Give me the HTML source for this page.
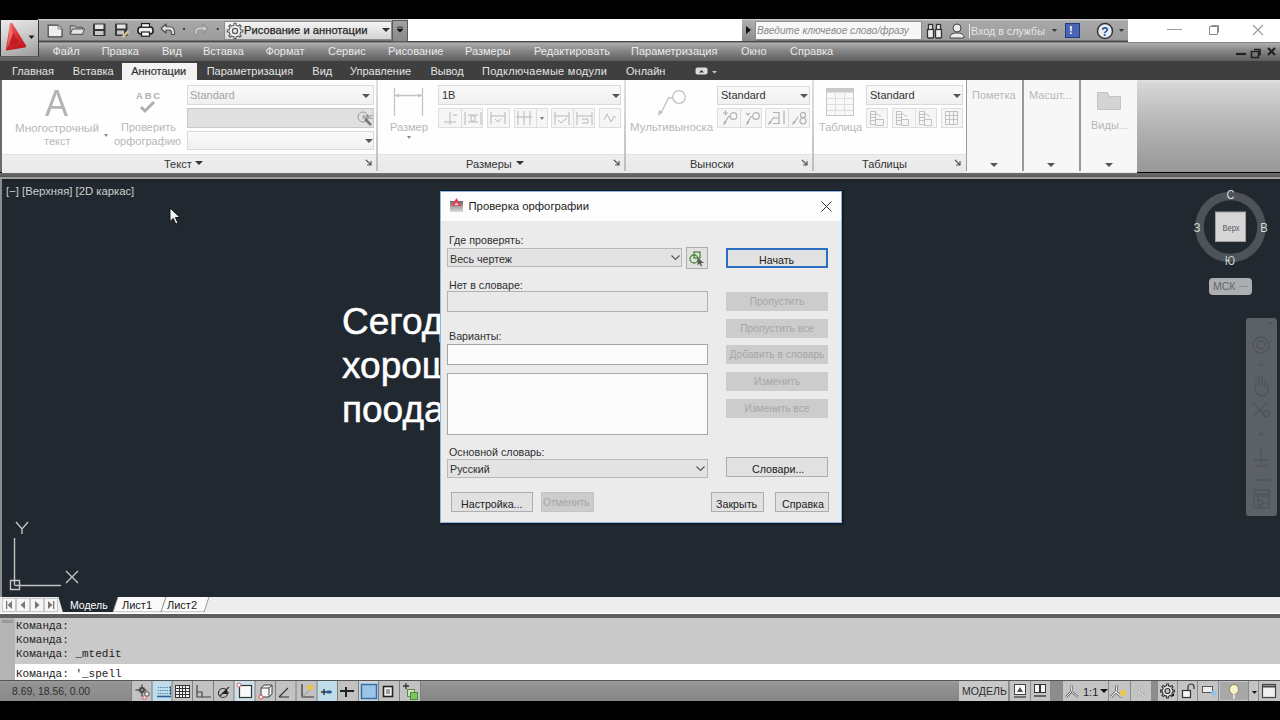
<!DOCTYPE html>
<html><head><meta charset="utf-8">
<style>
*{margin:0;padding:0;box-sizing:border-box}
html,body{width:1280px;height:720px;overflow:hidden;background:#000;font-family:"Liberation Sans",sans-serif}
.a{position:absolute}
.t{position:absolute;white-space:nowrap;line-height:1}
#qat{left:38px;top:19px;width:1242px;height:23px;background:linear-gradient(#c9c9c9 0,#c9c9c9 1px,#a8a8a8 2px,#9c9c9c 21px,#4a4a4a 22px)}
#menu{left:0;top:42px;width:1280px;height:19px;background:linear-gradient(#5a5a5a 0,#b0b0b0 1px,#a2a2a2 3px,#878787 45%,#5e5e5e)}
#tabs{left:0;top:61px;width:1280px;height:18.5px;background:#3f3f3f}
#ribbon{left:0;top:79.5px;width:1280px;height:92px;background:#fefefe}
#draw{left:0;top:172px;width:1280px;height:425px;background:#212830}
.mi{color:#eaeaea;font-size:11px;top:46.2px}
.ti{color:#e4e4e4;font-size:11px;top:65.7px}
.sep{top:80px;width:2px;height:91px;background:linear-gradient(#e0e0e0,#bdbdbd)}
.rl{font-size:11px;color:#b8b8b8}
.pt{top:159px;font-size:11px;color:#333}
.combo{background:linear-gradient(#fafafa,#f0f0f0);border:1px solid #dadada}
.arr{width:0;height:0;border-left:4px solid transparent;border-right:4px solid transparent;border-top:4px solid #555}
.btn{height:20px;background:#f6f6f6;border:1px solid #dedede}
.dl{font-size:10.7px;color:#2e2e2e}
.dd{font-size:10.2px;color:#a6a6a6}
.dbtn{width:102px;height:19px;background:#cccccc;font-size:10.2px;color:#a6a6a6;text-align:center;line-height:20px;white-space:nowrap}
.cm{font-family:"Liberation Mono",monospace;font-size:11px;color:#222}
</style></head><body>
<!-- ===== TOP BARS ===== -->
<div class="a" style="left:0;top:0;width:1280px;height:19px;background:#000"></div>
<div id="qat" class="a"></div>
<div class="a" style="left:407.5px;top:19px;width:334.5px;height:22px;background:#fff"></div>
<div class="a" style="left:1128px;top:19px;width:152px;height:23px;background:#fff"></div>
<div id="menu" class="a"></div>
<div id="tabs" class="a"></div>
<!-- logo -->
<div class="a" style="left:0;top:20px;width:39px;height:37px;background:linear-gradient(160deg,#ececec,#c4c4c4 55%,#9c9c9c);border-left:1px solid #333;border-right:1px solid #3a3a3a;border-bottom:1px solid #5a5a5a"></div>
<svg class="a" style="left:1px;top:20px" width="38" height="37" viewBox="0 0 38 37">
 <defs><filter id="bl" x="-20%" y="-20%" width="140%" height="140%"><feGaussianBlur stdDeviation="0.7"/></filter>
 <linearGradient id="rg" x1="0" y1="0" x2="0.3" y2="1"><stop offset="0" stop-color="#f07c7c"/><stop offset=".45" stop-color="#e23a3a"/><stop offset="1" stop-color="#c01a20"/></linearGradient></defs>
 <g filter="url(#bl)">
 <path d="M9 3.5Q10 2 11.5 3.5L25 25.5Q25.5 27 24 27.5L6 30.5Q4.5 30.5 5 29z" fill="url(#rg)"/>
 <path d="M12 13l6 10-9 2z" fill="#b81c22" opacity=".75"/>
 <path d="M9 4l3 9-6 16z" fill="#f59a9a" opacity=".5"/>
 </g>
 <path d="M27.5 15.5h6l-3 3.5z" fill="#1a1a1a"/>
</svg>
<!-- QAT icons -->
<svg class="a" style="left:44px;top:22px" width="180" height="18" viewBox="0 0 180 18">
 <path d="M4.2 3.2h9.8l4 3.8v7.8H4.2z" fill="#eeeeee" stroke="#4a4a4a" stroke-width="1.2"/>
 <path d="M14 3.2v3.8h4" fill="#ddd" stroke="#777" stroke-width="0.8"/>
 <path d="M26.2 3.8h4.5l1.5 1.5h6.5v7H26.2z" fill="#bdbdbd" stroke="#555"/>
 <path d="M28.5 7h12l-2.2 5.3H26.2z" fill="#e4e4e4" stroke="#555"/>
 <rect x="49" y="1.5" width="12.5" height="12.5" rx="1" fill="#363636"/>
 <rect x="51" y="2.5" width="8.5" height="4.5" fill="#e6e6e6"/>
 <rect x="51" y="9" width="8.5" height="4" fill="#c8c8c8"/>
 <rect x="71" y="1.5" width="12.5" height="12.5" rx="1" fill="#3a3a3a"/>
 <rect x="73" y="2.5" width="8.5" height="4" fill="#e6e6e6"/>
 <rect x="73" y="8.5" width="7" height="4" fill="#c8c8c8"/>
 <path d="M78.5 15l6-6" stroke="#f4e8b0" stroke-width="2.2"/><path d="M78.5 15l6-6" stroke="#b89830" stroke-width="0.8"/>
 <rect x="94" y="5" width="15" height="7" rx="3" fill="#f0f0f0" stroke="#1e1e1e" stroke-width="1.6"/>
 <rect x="97.5" y="1.6" width="8" height="3.6" fill="#f6f6f6" stroke="#1e1e1e" stroke-width="1.2"/>
 <rect x="97.5" y="10" width="8" height="4.2" fill="#fafafa" stroke="#1e1e1e" stroke-width="1.2"/>
 <path d="M117 6.5l5-4.5v2.8h3.5c3.5 0 5 2.5 5 5.5v2.2h-3v-2c0-1.5-.8-2.5-2.5-2.5H122v3z" fill="#e6e6e6" stroke="#4a4a4a" stroke-width="1.1" stroke-linejoin="round"/>
 <circle cx="140" cy="7" r="1.1" fill="#2a2a2a"/>
 <path d="M164 6.5l-5-4.5v2.8h-3.5c-3.5 0-5 2.5-5 5.5v2.2h3v-2c0-1.5.8-2.5 2.5-2.5H159v3z" fill="#c8c8c8" stroke="#909090" stroke-width="1.1" stroke-linejoin="round"/>
 <circle cx="173.7" cy="7" r="1.1" fill="#2a2a2a"/>
</svg>
<!-- workspace dropdown -->
<div class="a" style="left:224px;top:21px;width:168px;height:19px;background:linear-gradient(#f4f4f4,#d4d4d4);border:1px solid #8a8a8a"></div>
<svg class="a" style="left:226px;top:22px" width="18" height="18" viewBox="0 0 16 16"><path d="M12.95 6.40 L13.12 7.09 L14.95 7.13 L14.95 8.87 L13.12 8.91 L12.63 10.37 L12.26 10.98 L13.53 12.29 L12.29 13.53 L10.98 12.26 L9.60 12.95 L8.91 13.12 L8.87 14.95 L7.13 14.95 L7.09 13.12 L5.63 12.63 L5.02 12.26 L3.71 13.53 L2.47 12.29 L3.74 10.98 L3.05 9.60 L2.88 8.91 L1.05 8.87 L1.05 7.13 L2.88 7.09 L3.37 5.63 L3.74 5.02 L2.47 3.71 L3.71 2.47 L5.02 3.74 L6.40 3.05 L7.09 2.88 L7.13 1.05 L8.87 1.05 L8.91 2.88 L10.37 3.37 L10.98 3.74 L12.29 2.47 L13.53 3.71 L12.26 5.02Z" fill="#f4f4f4" stroke="#555" stroke-width="0.9"/><circle cx="8" cy="8" r="2.3" fill="#eee" stroke="#555" stroke-width="1.1"/></svg>
<div class="t" style="left:244px;top:25px;font-size:11.2px;color:#262626;-webkit-text-stroke:0.25px #262626">Рисование и аннотации</div>
<svg class="a" style="left:382px;top:27px" width="8" height="6"><path d="M0 1h8L4 5z" fill="#333"/></svg>
<div class="a" style="left:391.5px;top:19.5px;width:16px;height:22px;background:linear-gradient(#a0a0a0,#888);border:1px solid #5a5a5a"></div>
<svg class="a" style="left:396px;top:26px" width="8" height="7"><rect x="1" y="0.5" width="6" height="2" rx="1" fill="#555"/><path d="M0.5 3h7L4 6.5z" fill="#111"/></svg>
<!-- search -->
<div class="a" style="left:742px;top:20px;width:13px;height:21px;background:linear-gradient(#b0b0b0,#8a8a8a)"></div>
<svg class="a" style="left:746px;top:26px" width="5" height="8"><path d="M0 0l5 4-5 4z" fill="#111"/></svg>
<div class="a" style="left:755px;top:21px;width:167px;height:19px;background:#f7f7f7;border:1px solid #8c8c8c"></div>
<div class="t" style="left:757px;top:26px;font-size:10.15px;font-style:italic;color:#8a8a8a">Введите ключевое слово/фразу</div>
<svg class="a" style="left:926px;top:23px" width="17" height="16" viewBox="0 0 17 16"><g fill="#f0f0f0" stroke="#333" stroke-width="1.3"><rect x="1.5" y="6" width="6" height="9" rx="1"/><rect x="9.5" y="6" width="6" height="9" rx="1"/><rect x="2.5" y="1.5" width="4" height="5"/><rect x="10.5" y="1.5" width="4" height="5"/></g></svg>
<svg class="a" style="left:949px;top:22px" width="16" height="17" viewBox="0 0 16 17"><circle cx="8" cy="6" r="4" fill="#ececec" stroke="#444"/><path d="M1 16c0-4 3-5 7-5s7 1 7 5z" fill="#ececec" stroke="#444"/></svg>
<div class="a" style="left:969px;top:24px;width:1px;height:14px;background:#e8e8e8"></div>
<div class="t" style="left:971px;top:26px;font-size:10.7px;color:#e6e6e6">Вход в службы</div>
<svg class="a" style="left:1052px;top:29px" width="5" height="4"><path d="M0 0h5L2.5 3z" fill="#333"/></svg>
<div class="a" style="left:1065px;top:23px;width:15px;height:15px;background:#4a64b4;border:1px solid #223a80"></div>
<div class="t" style="left:1069px;top:25px;font-size:11px;font-weight:bold;color:#fff">!</div>
<svg class="a" style="left:1096px;top:22px" width="18" height="18" viewBox="0 0 18 18"><circle cx="9" cy="9" r="7.5" fill="#e8eef6" stroke="#333" stroke-width="1.5"/><text x="9" y="13.5" text-anchor="middle" font-family="Liberation Sans" font-weight="bold" font-size="12" fill="#2a4a8a">?</text></svg>
<svg class="a" style="left:1119px;top:29px" width="5" height="4"><path d="M0 0h5L2.5 3z" fill="#333"/></svg>
<!-- window controls -->
<div class="a" style="left:1167px;top:29px;width:15px;height:1px;background:#9a9a9a"></div>
<svg class="a" style="left:1209px;top:23px" width="12" height="12"><path d="M2.5 2.5h7v7M0.5 3.5h8v8h-8z" fill="none" stroke="#8a8a8a"/></svg>
<svg class="a" style="left:1252px;top:24px" width="12" height="12"><path d="M1 1l10 10M11 1L1 11" stroke="#9a9a9a" stroke-width="1.1"/></svg>
<!-- menu -->
<div class="t mi" style="left:52.5px">Файл</div>
<div class="t mi" style="left:101.7px">Правка</div>
<div class="t mi" style="left:162px">Вид</div>
<div class="t mi" style="left:203px">Вставка</div>
<div class="t mi" style="left:265.4px">Формат</div>
<div class="t mi" style="left:328px">Сервис</div>
<div class="t mi" style="left:388px">Рисование</div>
<div class="t mi" style="left:465px">Размеры</div>
<div class="t mi" style="left:534px">Редактировать</div>
<div class="t mi" style="left:631px">Параметризация</div>
<div class="t mi" style="left:741px">Окно</div>
<div class="t mi" style="left:790px">Справка</div>
<svg class="a" style="left:1234px;top:45px" width="46" height="14" viewBox="0 0 46 14"><path d="M2 9h10" stroke="#222" stroke-width="2.2"/><path d="M20 4.5h6v6M17.5 6.5h7v6h-7z" fill="none" stroke="#222" stroke-width="1.6"/><path d="M34 3l7 7M41 3l-7 7" stroke="#222" stroke-width="2.2"/></svg>
<!-- tabs -->
<div class="a" style="left:122px;top:63px;width:75px;height:17px;background:linear-gradient(#f4f4f4,#f0f0f0)"></div>
<div class="t ti" style="left:12px">Главная</div>
<div class="t ti" style="left:72.8px">Вставка</div>
<div class="t ti" style="left:131.2px;color:#333;-webkit-text-stroke:0.2px #333">Аннотации</div>
<div class="t ti" style="left:206.7px">Параметризация</div>
<div class="t ti" style="left:312.3px">Вид</div>
<div class="t ti" style="left:350px">Управление</div>
<div class="t ti" style="left:430.4px">Вывод</div>
<div class="t ti" style="left:482px;letter-spacing:0.28px">Подключаемые модули</div>
<div class="t ti" style="left:626px">Онлайн</div>
<svg class="a" style="left:695px;top:67px" width="24" height="9"><rect x="0.5" y="0.5" width="12" height="7" rx="2" fill="#dcdcdc"/><path d="M4 5.5h5L6.5 3z" fill="#333"/><path d="M17 4h5l-2.5 2.5z" fill="#c8c8c8"/></svg>
<!-- ===== RIBBON ===== -->
<div id="ribbon" class="a"></div>
<div class="a" style="left:0;top:80px;width:2px;height:92px;background:#6a6a6a"></div>
<!-- panel title bars -->
<div class="a" style="left:2px;top:154px;width:1135px;height:18.5px;background:linear-gradient(#eeeeee,#e9e9ea);border-top:1px solid #e2e2e2"></div>
<!-- separators -->
<div class="a sep" style="left:376px"></div>
<div class="a sep" style="left:624px"></div>
<div class="a sep" style="left:812px"></div>
<div class="a sep" style="left:966px"></div>
<div class="a sep" style="left:1022px"></div>
<div class="a sep" style="left:1079px"></div>
<div class="a" style="left:966px;top:79.5px;width:171px;height:92px;background:#f7f7f7"></div>
<div class="a sep" style="left:965.5px;width:1.5px;background:#9a9a9a"></div>
<div class="a sep" style="left:1022px;width:1.5px;background:#9a9a9a"></div>
<div class="a sep" style="left:1079px;width:1.5px;background:#9a9a9a"></div>
<div class="a" style="left:1137px;top:80px;width:143px;height:91.5px;background:linear-gradient(#e0e0e0,#d6d6d6 4%,#b4b4b4 50%,#979797)"></div>
<div class="a" style="left:0;top:172.5px;width:1280px;height:4.5px;background:linear-gradient(#6e6e6e,#565656)"></div>
<div class="a" style="left:0;top:177px;width:1280px;height:2px;background:#9c9da0"></div><div class="a" style="left:0;top:179px;width:1280px;height:3px;background:#1f2328"></div>
<!-- Text panel -->
<div class="t" style="left:44.5px;top:84.5px;font-size:37.5px;color:#b4b4b4;transform:scaleX(0.92);transform-origin:left">A</div>
<div class="t rl" style="left:15px;top:122px;font-size:11.6px">Многострочный</div>
<div class="t rl" style="left:44px;top:136px">текст</div>
<div class="a" style="left:104px;top:134px;width:0;height:0;border-left:2px solid transparent;border-right:2px solid transparent;border-top:3px solid #888"></div>
<div class="t" style="left:136px;top:91px;font-size:9.5px;font-weight:bold;color:#b0b0b0;letter-spacing:1.8px">ABC</div>
<svg class="a" style="left:138px;top:100px" width="20" height="14"><path d="M3 7l4 4 9-9" fill="none" stroke="#b0b0b0" stroke-width="3"/></svg>
<div class="t rl" style="left:121px;top:122px">Проверить</div>
<div class="t rl" style="left:114px;top:136px">орфографию</div>
<div class="a combo" style="left:187px;top:85px;width:187px;height:20px"></div>
<div class="t" style="left:190px;top:90px;font-size:11px;color:#a4a4a4">Standard</div>
<div class="a arr" style="left:362px;top:94px"></div>
<div class="a" style="left:187px;top:108px;width:187px;height:20px;background:#e0e0e0;border:1px solid #c8c8c8"></div>
<svg class="a" style="left:356px;top:110px" width="18" height="16"><circle cx="7" cy="7" r="5" fill="none" stroke="#999"/><text x="6" y="9" font-size="5" font-family="Liberation Sans" font-weight="bold" fill="#888">ABC</text><path d="M9 9l6 6" stroke="#777" stroke-width="2.5"/></svg>
<div class="a combo" style="left:187px;top:131px;width:187px;height:19px"></div>
<div class="a arr" style="left:365px;top:139px"></div>
<div class="t pt" style="left:164px">Текст</div>
<div class="a arr" style="left:195px;top:161px;border-top-color:#333"></div>
<svg class="a" style="left:365px;top:159px" width="8" height="8"><path d="M1 1l5 5M6 2v4H2" fill="none" stroke="#555" stroke-width="1.2"/></svg>
<!-- Dim panel -->
<svg class="a" style="left:390px;top:87px" width="36" height="30"><g stroke="#c4c4c4" stroke-width="1.3" fill="none"><path d="M4.5 1v28M32.5 1v28M4.5 8.5h28"/></g><path d="M5 8.5l4-2v4zM32 8.5l-4-2v4z" fill="#c4c4c4"/></svg>
<div class="t rl" style="left:390px;top:122px">Размер</div>
<div class="a" style="left:407px;top:136px;width:0;height:0;border-left:2px solid transparent;border-right:2px solid transparent;border-top:3px solid #888"></div>
<div class="a combo" style="left:438px;top:85px;width:183px;height:20px"></div>
<div class="t" style="left:442px;top:90px;font-size:11px;color:#333">1В</div>
<div class="a arr" style="left:612px;top:94px"></div>
<div class="a btn" style="left:438px;top:108px;width:45px"></div>
<div class="a btn" style="left:487px;top:108px;width:23px"></div>
<div class="a btn" style="left:514px;top:108px;width:34px"></div>
<div class="a btn" style="left:551px;top:108px;width:44px"></div>
<div class="a btn" style="left:599px;top:108px;width:22px"></div>
<div class="a" style="left:461px;top:109px;width:1px;height:18px;background:#dcdcdc"></div>
<div class="a" style="left:536px;top:109px;width:1px;height:18px;background:#dcdcdc"></div>
<div class="a" style="left:573px;top:109px;width:1px;height:18px;background:#dcdcdc"></div>
<svg class="a" style="left:438px;top:108px" width="184" height="20"><g fill="none" stroke="#b8b8b8" stroke-width="1">
 <path d="M12 4v13M6 14h12M15 7h4"/>
 <path d="M27 4v13M43 4v13M30 7h10M30 14h10M33 8h4v5h-4z"/>
 <path d="M53 4v12M67 4v12M53 8h14M57 11l3 3 3-3"/>
 <path d="M80 3v14M86 3v14M92 3v14M78 9h16"/>
 <path d="M117 4v13M131 4v13M117 8h14M120 12l3 3 6-5"/>
 <path d="M139 4v13M154 4v13M139 8h15M144 11h6v4h-6"/>
 <path d="M166 12l3-6 4 8 3-6 2 2"/>
</g><path d="M102 9h4l-2 3z" fill="#777"/></svg>
<div class="t pt" style="left:466px">Размеры</div>
<div class="a arr" style="left:516px;top:161px;border-top-color:#333"></div>
<svg class="a" style="left:613px;top:159px" width="8" height="8"><path d="M1 1l5 5M6 2v4H2" fill="none" stroke="#555" stroke-width="1.2"/></svg>
<!-- Leader panel -->
<svg class="a" style="left:655px;top:88px" width="34" height="32"><g fill="none" stroke="#c0c0c0" stroke-width="1.3"><circle cx="24" cy="9" r="6.3"/><path d="M17.5 10h-4l-8 16"/></g><path d="M3 28l1-6 4 2z" fill="#c0c0c0"/></svg>
<div class="t rl" style="left:630px;top:122px;font-size:11.5px">Мультивыноска</div>
<div class="a combo" style="left:717px;top:86px;width:93px;height:19px"></div>
<div class="t" style="left:721px;top:90px;font-size:11px;color:#333">Standard</div>
<div class="a arr" style="left:800px;top:94px"></div>
<div class="a btn" style="left:717px;top:108px;width:45px"></div>
<div class="a btn" style="left:765px;top:108px;width:45px"></div>
<div class="a" style="left:740px;top:109px;width:1px;height:18px;background:#dcdcdc"></div>
<div class="a" style="left:788px;top:109px;width:1px;height:18px;background:#dcdcdc"></div>
<svg class="a" style="left:717px;top:108px" width="94" height="20"><g fill="none" stroke="#b0b0b0" stroke-width="1.2">
 <circle cx="16.5" cy="8" r="3.3"/><path d="M13 8.5h-1.5l-4.5 8M6 5h5M8.5 2.5v5"/>
 <circle cx="39" cy="8" r="3.3"/><path d="M35.5 8.5h-1.5l-4.5 8M29 5l2 2 2-2"/>
 <path d="M52 16l5-7M56 4.5h6v11h-6M62 10h-5M67 3v13"/>
 <path d="M76 16l5-7"/><circle cx="86" cy="7" r="2.6"/><circle cx="86" cy="13" r="3"/>
</g><path d="M6 17l1.5-4 2 1.5z M29 17l1.5-4 2 1.5z M51 17l1.5-4 2 1.5z M75 17l1.5-4 2 1.5z" fill="#a8a8a8"/></svg>
<div class="t pt" style="left:690px">Выноски</div>
<svg class="a" style="left:801px;top:159px" width="8" height="8"><path d="M1 1l5 5M6 2v4H2" fill="none" stroke="#555" stroke-width="1.2"/></svg>
<!-- Table panel -->
<svg class="a" style="left:826px;top:88px" width="28" height="28"><rect x="0.5" y="0.5" width="27" height="27" fill="#f8f8f8" stroke="#c8c8c8"/><rect x="0.5" y="0.5" width="27" height="4" fill="#c8c8c8"/><g stroke="#dedede"><path d="M9.5 4v23M18.5 4v23M1 10.5h26M1 16.5h26M1 22.5h26"/></g></svg>
<div class="t rl" style="left:819px;top:122px">Таблица</div>
<div class="a combo" style="left:866px;top:85px;width:97px;height:20px"></div>
<div class="t" style="left:870px;top:90px;font-size:11px;color:#333">Standard</div>
<div class="a arr" style="left:953px;top:94px"></div>
<div class="a btn" style="left:866px;top:108px;width:22px"></div>
<div class="a btn" style="left:892px;top:108px;width:45px"></div>
<div class="a btn" style="left:941px;top:108px;width:22px"></div>
<div class="a" style="left:915px;top:109px;width:1px;height:18px;background:#e2e2e2"></div>
<svg class="a" style="left:866px;top:108px" width="98" height="20"><g fill="none" stroke="#bcbcbc" stroke-width="0.9">
 <path d="M4.5 3.5h5v13h-5zM4.5 6.5h5M4.5 9.5h5M4.5 12.5h5M9.5 11.5h8v6h-8zM10 5.5l5 3"/>
 <path d="M30.5 3.5h5v13h-5zM30.5 6.5h5M30.5 9.5h5M30.5 12.5h5M35.5 11.5h7v6h-7zM36 5.5l5 3"/>
 <path d="M53.5 3.5h5v13h-5zM53.5 6.5h5M53.5 9.5h5M53.5 12.5h5M58.5 11.5h7v6h-7zM59 5.5l5 3"/>
 <path d="M79.5 3.5h12v13h-12zM79.5 7.5h12M83.5 3.5v13M87.5 3.5v13M79.5 11.5h12M89 3l3 2"/>
</g></svg>
<div class="t pt" style="left:862px">Таблицы</div>
<svg class="a" style="left:954px;top:159px" width="8" height="8"><path d="M1 1l5 5M6 2v4H2" fill="none" stroke="#555" stroke-width="1.2"/></svg>
<!-- collapsed panels -->
<div class="t rl" style="left:972px;top:90px">Пометка</div>
<div class="t rl" style="left:1029px;top:90px">Масшт...</div>
<svg class="a" style="left:1097px;top:92px" width="24" height="18"><path d="M0.5 0.5h10l2 4h11v13H0.5z" fill="#d4d4d4" stroke="#c4c4c4"/></svg>
<div class="t rl" style="left:1091px;top:120px">Виды...</div>
<div class="a arr" style="left:990px;top:163px"></div>
<div class="a arr" style="left:1047px;top:163px"></div>
<div class="a arr" style="left:1105px;top:163px"></div>
<!-- ===== DRAWING ===== -->
<div class="a" style="left:0;top:182px;width:1280px;height:415px;background:#212830"></div>
<div class="a" style="left:0;top:179px;width:2px;height:418px;background:#8c8c8c"></div>
<div class="t" style="left:6px;top:185.5px;font-size:11.3px;color:#cfcfcf">[−] [Верхняя] [2D каркас]</div>
<svg class="a" style="left:169px;top:207px" width="14" height="19" viewBox="0 0 14 19"><path d="M1 1v13.5l3.2-3.1 2.6 5.6 2.2-1-2.6-5.5h4.6z" fill="#f2f2f2" stroke="#0a0c10" stroke-width="0.9" stroke-linejoin="round"/></svg>
<div class="t" style="left:342px;top:299.5px;font-size:37px;line-height:44.4px;color:#fff;-webkit-text-stroke:0.5px #fff">Сегодня<br>хорошая<br>поода</div>
<!-- UCS -->
<svg class="a" style="left:6px;top:518px" width="80" height="76" viewBox="0 0 80 76"><g stroke="#c4c4c4" stroke-width="1.4" fill="none">
 <path d="M8.5 20v47.5M9 67.5h46M4.5 62.5h9v9h-9z"/>
 <path d="M10 4l6 7 6-7M16 11v5"/>
 <path d="M60 53l12 12M72 53l-12 12"/>
</g></svg>
<!-- viewcube -->
<svg class="a" style="left:1190px;top:184px" width="80" height="86" viewBox="0 0 80 86">
 <circle cx="40.5" cy="43" r="31" fill="none" stroke="#4d5359" stroke-width="8.5"/>
 <rect x="25.5" y="28" width="30" height="29.5" fill="#d6d6d6" stroke="#a0a0a0"/>
 <text x="32.5" y="47" font-family="Liberation Sans" font-size="9" fill="#5a5a5a" textLength="17" lengthAdjust="spacingAndGlyphs">Верх</text>
 <g font-family="Liberation Sans" font-size="13" fill="#d8d8d8" text-anchor="middle">
 <text x="40.5" y="14.5" textLength="8" lengthAdjust="spacingAndGlyphs">С</text><text x="7" y="48" textLength="7" lengthAdjust="spacingAndGlyphs">З</text><text x="74" y="48" textLength="7.5" lengthAdjust="spacingAndGlyphs">В</text><text x="40" y="81" textLength="10" lengthAdjust="spacingAndGlyphs">Ю</text></g>
</svg>
<div class="a" style="left:1208.5px;top:278px;width:43px;height:16.5px;border-radius:4px;background:#acaeb1"></div>
<div class="t" style="left:1213px;top:281px;font-size:10.5px;color:#666">МСК</div>
<div class="a" style="left:1239px;top:285.5px;width:9px;height:1px;background:#8c8e90"></div>
<!-- navbar -->
<div class="a" style="left:1246px;top:318px;width:31px;height:198px;border-radius:3px;background:#5c6168"></div>
<svg class="a" style="left:1246px;top:318px" width="31" height="198" viewBox="0 0 31 198"><g fill="none" stroke="#4f545a" stroke-width="1.3">
 <path d="M22 5h4"/>
 <circle cx="15" cy="27" r="8"/><circle cx="15" cy="27" r="4"/>
 <path d="M13.5 46l1.5 1.5 1.5-1.5"/>
 <path d="M10 69v-8M13 68v-10M16 68v-10M19 69v-8M9 69c0 6 3 9 7 9s6-3 6-7v-6"/>
 <path d="M7 85l14 14M21 85l-14 14M17 96a3 3 0 1 0 6 0a3 3 0 1 0-6 0"/>
 <path d="M13 115l2 2 2-2"/>
 <path d="M15 130v15M8 142h14M10 146c0 3 10 3 10 0"/>
 <path d="M10 162h14"/>
 <path d="M8 172h15v4H8zM8 178h15v12H8zM12 181l6 4-6 4z"/>
</g></svg>
<!-- ===== DIALOG ===== -->
<div class="a" style="left:439.5px;top:189.5px;width:404px;height:335px;background:#101c28"></div>
<div class="a" style="left:440px;top:191px;width:402px;height:332px;background:#ebebec;border:1px solid #8fb5df"></div>
<div class="a" style="left:441px;top:192px;width:400px;height:29px;background:#fdfdfd"></div>
<div class="a" style="left:836px;top:221px;width:5px;height:300px;background:#e9edf1"></div>
<svg class="a" style="left:448px;top:197px" width="17" height="16" viewBox="0 0 17 16"><defs><linearGradient id="dg" x1="0" y1="0" x2="0" y2="1"><stop offset="0" stop-color="#6a6a6a"/><stop offset="1" stop-color="#dcdcdc"/></linearGradient><filter id="b2"><feGaussianBlur stdDeviation="0.5"/></filter></defs><g filter="url(#b2)"><rect x="2" y="4" width="13" height="11" fill="url(#dg)"/><path d="M8.5 1l5 8H10l-1.5-2.5L7 9H3.5z" fill="#e2405a"/><path d="M7.5 6h2l1 2h-4z" fill="#f8b8c0"/></g></svg>
<div class="t" style="left:468.5px;top:201px;font-size:11.3px;color:#222">Проверка орфографии</div>
<svg class="a" style="left:821px;top:201px" width="11" height="11"><path d="M0.5 0.5l10 10M10.5 0.5l-10 10" stroke="#333" stroke-width="1"/></svg>
<div class="t dl" style="left:449px;top:234.5px">Где проверять:</div>
<div class="a" style="left:447px;top:248px;width:235px;height:19px;background:#e3e3e3;border:1px solid #b8b8b8"></div>
<div class="t dl" style="left:450px;top:253.5px">Весь чертеж</div>
<svg class="a" style="left:671px;top:255px" width="9" height="6"><path d="M0.5 0.5l4 4 4-4" fill="none" stroke="#555" stroke-width="1.1"/></svg>
<div class="a" style="left:686px;top:247px;width:22px;height:22px;background:#e1e1e1;border:1px solid #adadad"></div>
<svg class="a" style="left:688px;top:249px" width="18" height="18"><g fill="none" stroke="#4a8a3a" stroke-width="1.3"><circle cx="6" cy="10" r="4"/><rect x="6" y="3" width="6" height="6"/></g><path d="M10 9l6 5-3 0 1 3-1 .5-1.5-3-2 2z" fill="#555"/></svg>
<div class="a" style="left:726px;top:248px;width:102px;height:20px;background:#e1e1e1;border:2px solid #2a6ec0"></div>
<div class="t dl" style="left:759px;top:254.5px;color:#222">Начать</div>
<div class="t dl" style="left:449px;top:279.5px">Нет в словаре:</div>
<div class="a" style="left:447px;top:291px;width:261px;height:21px;background:#e9e9e9;border:1px solid #b0b0b0"></div>
<div class="t dl" style="left:449px;top:330.5px">Варианты:</div>
<div class="a" style="left:447px;top:344px;width:261px;height:21px;background:#fbfbfb;border:1px solid #a6a6a6"></div>
<div class="a" style="left:447px;top:373px;width:261px;height:62px;background:#fbfbfb;border:1px solid #a6a6a6"></div>
<div class="a dbtn" style="left:726px;top:292px">Пропустить</div>
<div class="a dbtn" style="left:726px;top:319px">Пропустить все</div>
<div class="a dbtn" style="left:726px;top:345px">Добавить в словарь</div>
<div class="a dbtn" style="left:726px;top:372px">Изменить</div>
<div class="a dbtn" style="left:726px;top:399px">Изменить все</div>
<div class="t dl" style="left:449px;top:446.5px">Основной словарь:</div>
<div class="a" style="left:447px;top:459px;width:261px;height:19px;background:#e3e3e3;border:1px solid #b8b8b8"></div>
<div class="t dl" style="left:450px;top:463.5px">Русский</div>
<svg class="a" style="left:696px;top:466px" width="9" height="6"><path d="M0.5 0.5l4 4 4-4" fill="none" stroke="#555" stroke-width="1.1"/></svg>
<div class="a" style="left:726px;top:457px;width:102px;height:20px;background:#e1e1e1;border:1px solid #adadad"></div>
<div class="t dl" style="left:752px;top:463.5px;color:#222">Словари...</div>
<div class="a" style="left:451px;top:492px;width:82px;height:20px;background:#e1e1e1;border:1px solid #adadad"></div>
<div class="t dl" style="left:461px;top:498.5px;color:#222">Настройка...</div>
<div class="a" style="left:541px;top:492px;width:53px;height:20px;background:#cccccc;border:1px solid #c4c4c4"></div>
<div class="t dd" style="left:543px;top:498px">Отменить</div>
<div class="a" style="left:711px;top:492px;width:53px;height:20px;background:#e1e1e1;border:1px solid #adadad"></div>
<div class="t dl" style="left:716px;top:498.5px;color:#222">Закрыть</div>
<div class="a" style="left:775px;top:492px;width:54px;height:20px;background:#e1e1e1;border:1px solid #adadad"></div>
<div class="t dl" style="left:782px;top:498.5px;color:#222">Справка</div>
<!-- ===== BOTTOM ===== -->
<div class="a" style="left:0;top:597px;width:1280px;height:16px;background:linear-gradient(#eaeeec,#ededeb 70%,#f0f0f0)"></div>
<div class="a" style="left:0;top:613px;width:1280px;height:1px;background:#fff"></div>
<div class="a" style="left:0;top:614px;width:1280px;height:4px;background:#5e5e5e"></div>
<svg class="a" style="left:2px;top:598px" width="58" height="14" viewBox="0 0 58 14"><g fill="#f6f6f6" stroke="#c8c8c8"><rect x="0.5" y="0.5" width="13" height="13"/><rect x="14.5" y="0.5" width="13" height="13"/><rect x="28.5" y="0.5" width="13" height="13"/><rect x="42.5" y="0.5" width="13" height="13"/></g><g fill="#777"><rect x="4" y="3" width="1.3" height="8"/><path d="M10 3v8L5.5 7z"/><path d="M23 3v8L18.5 7z"/><path d="M33 3v8L37.5 7z"/><path d="M46 3v8L50.5 7z"/><rect x="51" y="3" width="1.3" height="8"/></g></svg>
<svg class="a" style="left:57px;top:597px" width="153" height="15" viewBox="-3 0 153 15">
 <path d="M-1.5 0H58l-5 15H2.8z" fill="#212830"/>
 <path d="M58 0l-5 15h48l5-15" fill="#fafafa" stroke="#888" stroke-width="0.8"/>
 <path d="M106 0l-5 15h43l5-15" fill="#fafafa" stroke="#888" stroke-width="0.8"/>
</svg>
<div class="t" style="left:70px;top:600px;font-size:10.5px;color:#fff">Модель</div>
<div class="t" style="left:122px;top:600px;font-size:11px;color:#222">Лист1</div>
<div class="t" style="left:167px;top:600px;font-size:11px;color:#222">Лист2</div>
<!-- command -->
<div class="a" style="left:0;top:618px;width:1280px;height:46px;background:#c9c9c9"></div>
<div class="a" style="left:0;top:618px;width:15px;height:63px;background:#b4b4b4"></div>
<div class="a" style="left:2px;top:620px;width:11px;height:3px;background:#9a9a9a"></div>
<div class="a" style="left:15px;top:664px;width:1265px;height:16px;background:#fff"></div>
<div class="t cm" style="left:16px;top:621px">Команда:</div>
<div class="t cm" style="left:16px;top:635px">Команда:</div>
<div class="t cm" style="left:16px;top:649px">Команда: _mtedit</div>
<div class="t cm" style="left:16px;top:668.5px">Команда: '_spell</div>
<!-- status -->
<div class="a" style="left:0;top:680px;width:1280px;height:1px;background:#555"></div>
<div class="a" style="left:0;top:681px;width:1280px;height:20px;background:linear-gradient(#9e9e9e,#939393 15%,#858585)"></div>
<div class="a" style="left:0;top:681px;width:131px;height:20px;background:linear-gradient(#9a9a9a,#929292 15%,#8a8a8a)"></div>
<div class="t" style="left:12px;top:687px;font-size:10.4px;color:#2e2e2e">8.69, 18.56, 0.00</div>
<!-- status buttons -->
<div class="a" style="left:131px;top:681px;width:290px;height:20px;background:#c2c2c2"></div>
<div class="a" style="left:152px;top:681px;width:20px;height:20px;background:#bfdcea"></div>
<div class="a" style="left:234px;top:681px;width:21px;height:20px;background:#cfe2ec"></div>
<div class="a" style="left:317px;top:681px;width:21px;height:20px;background:#bfdcea"></div>
<div class="a" style="left:358px;top:681px;width:20px;height:20px;background:#cad6de"></div>
<svg class="a" style="left:131px;top:681px" width="290" height="20" viewBox="0 0 290 20">
 <g stroke="#7e7e7e" stroke-width="1"><path d="M0.5 0v20M21 0v20M41 0v20M61.5 0v20M82.5 0v20M103 0v20M124 0v20M144.5 0v20M165 0v20M186 0v20M206.5 0v20M227.5 0v20M247.5 0v20M268.5 0v20M289.5 0v20"/></g>
 <!-- 1 snap -->
 <g fill="none" stroke="#222" stroke-width="1"><path d="M11 3.5v12M4.5 9h11"/><rect x="9" y="7" width="4" height="4" fill="#888"/><circle cx="16" cy="13" r="2.2" fill="#f4f4f4" stroke="#444"/><rect x="12" y="15" width="3" height="3" fill="#fff" stroke="#c66"/></g>
 <!-- 2 grid blue -->
 <g fill="none" stroke="#4a7aa8" stroke-width="1" stroke-dasharray="1.2 1"><path d="M27 6.5h12M27 9.5h12M27 12.5h12"/></g><path d="M26 15.5h14" stroke="#2e5e94" stroke-width="1.6"/><path d="M39.5 5v9" stroke="#2e5e94" stroke-width="1"/>
 <!-- 3 grid -->
 <g fill="none" stroke="#333" stroke-width="1"><rect x="44.5" y="4.5" width="14" height="12" fill="#f4f4f4"/><path d="M44 7.5h15M44 10.5h15M44 13.5h15M48.5 4v13M51.5 4v13M54.5 4v13"/></g>
 <!-- 4 ortho -->
 <g fill="none" stroke="#444" stroke-width="1.2"><path d="M66 4v12h14M66 11h5v5"/></g>
 <!-- 5 polar -->
 <g fill="none" stroke="#333" stroke-width="1.2"><circle cx="92" cy="12" r="4.5"/><path d="M89 15l9-9M91 12h7" /></g><path d="M91 13l5-5v5z" fill="#222"/>
 <!-- 6 osnap -->
 <rect x="108.5" y="4.5" width="12" height="12" fill="#f8f8f8" stroke="#333" stroke-width="1.2"/><circle cx="108" cy="4" r="2" fill="#fff" stroke="#d66"/>
 <!-- 7 3dosnap -->
 <path d="M130 7l3-3h8v9l-3 3h-8z" fill="#f4f4f4" stroke="#444"/><path d="M130 7h8v9M138 7l3-3" fill="none" stroke="#444"/><circle cx="130" cy="16" r="2" fill="#fff" stroke="#e44"/>
 <!-- 8 otrack angle -->
 <path d="M148 16h10M148 16l9-9" fill="none" stroke="#333" stroke-width="1.2"/>
 <!-- 9 ucs -->
 <path d="M171 3v13h12" fill="none" stroke="#333" stroke-width="1.2"/><path d="M171 16l10-9" stroke="#999"/><rect x="176.5" y="4" width="5" height="5" fill="#f0c040" transform="rotate(45 179 6.5)"/>
 <!-- 10 dyn -->
 <path d="M190 11h10M193 8v6" stroke="#333" stroke-width="1.4"/><path d="M195 11c0-2 6-2 6 0s-6 2-6 0" fill="#2a5a9a"/>
 <!-- 11 lwt -->
 <path d="M209 10h14M215 6v10" stroke="#222" stroke-width="2"/>
 <!-- 12 transp -->
 <rect x="230.5" y="3.5" width="15" height="14" fill="#9cc4e6" stroke="#3a6ea8" stroke-width="1.5"/>
 <!-- 13 qp -->
 <rect x="252.5" y="5.5" width="9" height="10" fill="#f4f4f4" stroke="#222" stroke-width="1.6"/><path d="M256 8v5M258 8v5" stroke="#444"/>
 <!-- 14 sc -->
 <path d="M272 5h6M275 2v6" stroke="#333" stroke-width="1.3"/><rect x="276.5" y="8.5" width="7" height="7" fill="#cde4c4" stroke="#5a8a4a"/><rect x="279.5" y="11.5" width="7" height="7" fill="#7cc45c" stroke="#4a8a3a"/>
</svg>
<!-- right status -->
<div class="a" style="left:959px;top:681px;width:50px;height:20px;background:#c8c8c8;border-right:1px solid #8a8a8a"></div>
<div class="t" style="left:962px;top:686px;font-size:10.6px;color:#2e2e2e">МОДЕЛЬ</div>
<div class="a" style="left:1010px;top:681px;width:41px;height:20px;background:#c4c4c4"></div>
<div class="a" style="left:1051px;top:681px;width:12px;height:20px;background:#8c8c8c"></div>
<div class="a" style="left:1063px;top:681px;width:88px;height:20px;background:#c4c4c4"></div>
<div class="a" style="left:1151px;top:681px;width:7px;height:20px;background:#8c8c8c"></div>
<div class="a" style="left:1158px;top:681px;width:122px;height:20px;background:#c4c4c4"></div>
<div class="a" style="left:1220px;top:682px;width:28px;height:18px;background:#a8a8a8"></div>
<svg class="a" style="left:1009px;top:681px" width="271" height="20" viewBox="0 0 271 20">
 <g stroke="#8a8a8a"><path d="M21.5 0v20M41.5 0v20M99.5 0v20M121.5 0v20M148.5 0v20M168.5 0v20M188.5 0v20M209.5 0v20M239.5 0v20M249.5 0v20"/></g>
 <!-- paper -->
 <rect x="5.5" y="3.5" width="11" height="10" fill="#f8f8f8" stroke="#444"/><path d="M8 11l3-5 3 5z" fill="#555"/><path d="M5 16h12" stroke="#555" stroke-width="1.5"/>
 <rect x="25.5" y="3.5" width="5" height="8" fill="#f4f4f4" stroke="#333"/><rect x="31.5" y="3.5" width="5" height="8" fill="#f4f4f4" stroke="#333"/><path d="M25 15h12" stroke="#444" stroke-width="1.5"/>
 <!-- anno scale -->
 <path d="M63 4l-1 7-5 5M63 11l6 5" fill="none" stroke="#555" stroke-width="2.2"/><path d="M63 4l-1 7-5 5M63 11l6 5" fill="none" stroke="#f4f4f4" stroke-width="1"/>
 <text x="74" y="15" font-family="Liberation Sans" font-size="11" fill="#222">1:1</text>
 <path d="M91 8h8l-4 4z" fill="#111"/>
 <path d="M108 4l-1 7-5 5M107 11l6 5" fill="none" stroke="#555" stroke-width="2.6"/><path d="M108 4l-1 7-5 5M107 11l6 5" fill="none" stroke="#f4f4f4" stroke-width="1.1"/><circle cx="114" cy="12" r="3" fill="#f0c84a"/>
 <path d="M131 4l-1 7-5 5M130 11l6 5" fill="none" stroke="#a8a8a8" stroke-width="2.6"/><path d="M131 4l-1 7-5 5M130 11l6 5" fill="none" stroke="#dcdcdc" stroke-width="1.1"/>
 <!-- gear -->
 <g transform="translate(150.5 2)"><path d="M12.95 6.40 L13.12 7.09 L14.95 7.13 L14.95 8.87 L13.12 8.91 L12.63 10.37 L12.26 10.98 L13.53 12.29 L12.29 13.53 L10.98 12.26 L9.60 12.95 L8.91 13.12 L8.87 14.95 L7.13 14.95 L7.09 13.12 L5.63 12.63 L5.02 12.26 L3.71 13.53 L2.47 12.29 L3.74 10.98 L3.05 9.60 L2.88 8.91 L1.05 8.87 L1.05 7.13 L2.88 7.09 L3.37 5.63 L3.74 5.02 L2.47 3.71 L3.71 2.47 L5.02 3.74 L6.40 3.05 L7.09 2.88 L7.13 1.05 L8.87 1.05 L8.91 2.88 L10.37 3.37 L10.98 3.74 L12.29 2.47 L13.53 3.71 L12.26 5.02Z" fill="#eaeaea" stroke="#333" stroke-width="1.1"/><circle cx="8" cy="8" r="2.5" fill="#c4c4c4" stroke="#333" stroke-width="1.2"/></g><path d="M162 15h3v-3z" fill="#111"/>
 <!-- lock -->
 <rect x="173.5" y="9.5" width="8" height="7" fill="#f4f4f4" stroke="#333" stroke-width="1.2"/><path d="M179 9V6a3 3 0 0 1 6 0v2" fill="none" stroke="#333" stroke-width="1.2"/>
 <!-- hw -->
 <rect x="193.5" y="5.5" width="10" height="6" fill="#eee" stroke="#555"/><circle cx="205" cy="12" r="2.5" fill="#8cc4ea"/><path d="M205 12v5" stroke="#8cc4ea" stroke-width="1.5"/>
 <!-- bulb -->
 <ellipse cx="225" cy="8.5" rx="4.5" ry="5" fill="#f8f2c8" stroke="#8a8460"/><path d="M225 13v5" stroke="#eee" stroke-width="1.5"/>
 <path d="M243 10h5l-2.5 3z" fill="#111"/>
 <rect x="253.5" y="3.5" width="13" height="13" fill="#f0f0f0" stroke="#444" stroke-width="1.2"/><path d="M254 5.5h12" stroke="#444" stroke-width="2"/>
</svg>
<div class="a" style="left:0;top:701px;width:1280px;height:19px;background:#000"></div>
</body></html>
